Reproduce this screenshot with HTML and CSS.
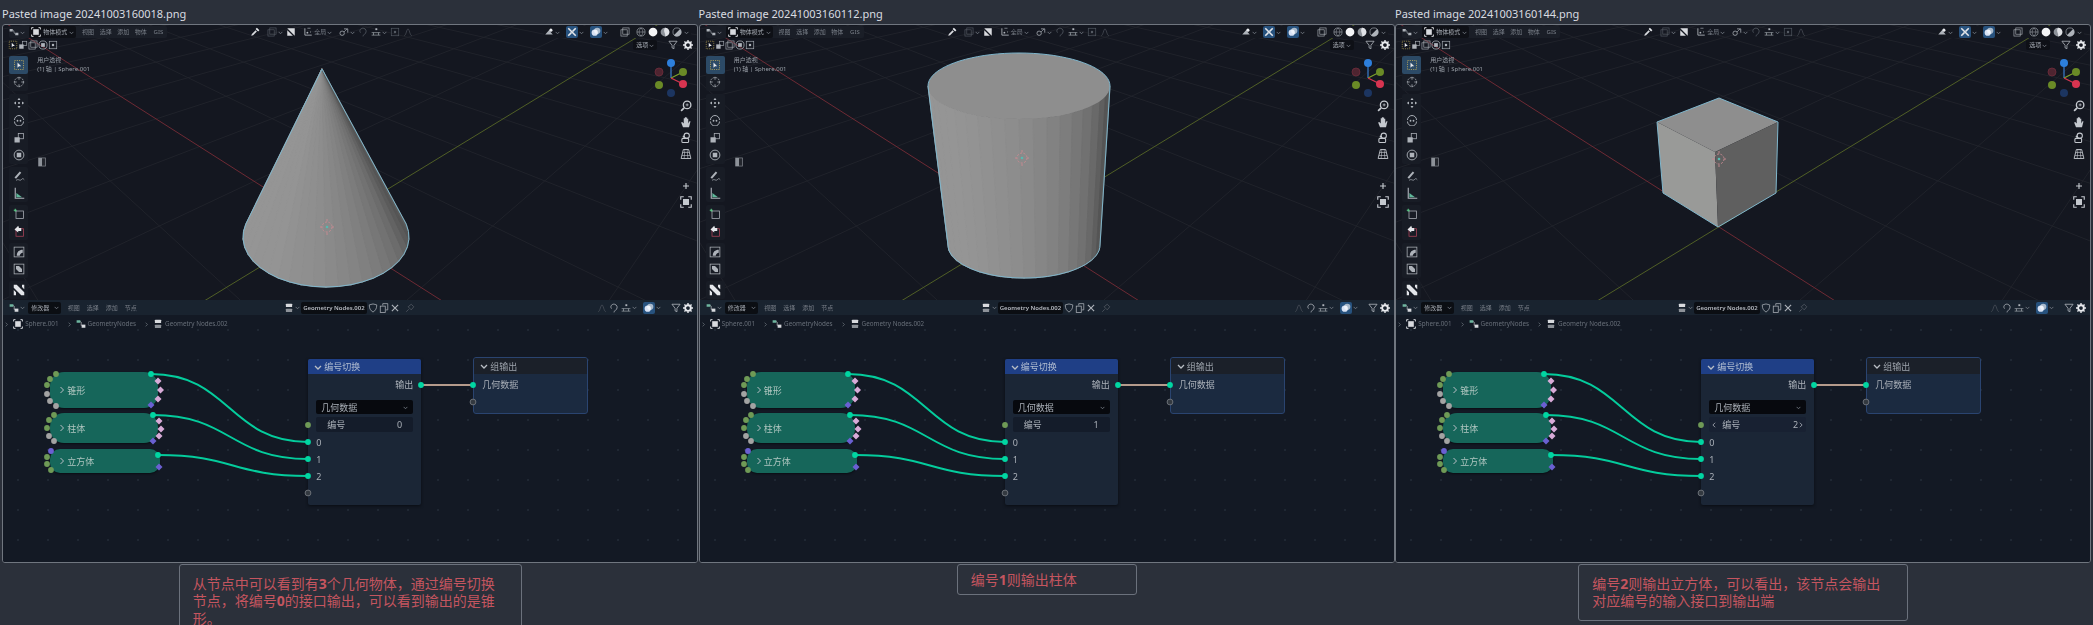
FILE: index.html
```html
<!DOCTYPE html>
<html lang="en">
<head>
<meta charset="UTF-8">
<meta name="viewport" content="width=device-width, initial-scale=1.0">
<title>Pasted images</title>
<link rel="stylesheet" href="styles.css">
</head>
<body>

<!-- icon sprite, used by every screenshot -->
<svg class="sprite" xmlns="http://www.w3.org/2000/svg">
  <symbol id="i-select" viewBox="0 0 16 16"><rect x="2" y="2" width="12" height="12" fill="none" stroke="#c9b25a" stroke-width="1" stroke-dasharray="1.5 1.5"/><path d="M6 4.5v7l2-1.8 3-.2z" fill="#e8eaee"/></symbol>
  <symbol id="i-cursor" viewBox="0 0 16 16"><circle cx="8" cy="8" r="6" fill="none" stroke="currentColor" stroke-dasharray="2.5 1"/><path d="M8 1v4M8 11v4M1 8h4M11 8h4" stroke="currentColor"/></symbol>
  <symbol id="i-move" viewBox="0 0 16 16"><path d="M8 1l2 3H6zM8 15l-2-3h4zM1 8l3-2v4zM15 8l-3 2V6z" fill="currentColor"/><circle cx="8" cy="8" r="1.4" fill="currentColor"/></symbol>
  <symbol id="i-rotate" viewBox="0 0 16 16"><path d="M2 8a6 6 0 0 1 12 0M14 10a6 6 0 0 1-12 0" fill="none" stroke="currentColor" stroke-width="1.3"/><circle cx="6" cy="9" r="1.2" fill="currentColor"/><circle cx="10" cy="9" r="1.2" fill="currentColor"/></symbol>
  <symbol id="i-scale" viewBox="0 0 16 16"><rect x="2" y="7" width="7" height="7" fill="currentColor"/><rect x="7" y="2" width="7" height="7" fill="none" stroke="currentColor"/></symbol>
  <symbol id="i-transform" viewBox="0 0 16 16"><circle cx="8" cy="8" r="6.5" fill="none" stroke="currentColor" stroke-width="1.2"/><rect x="5" y="5" width="6" height="6" fill="currentColor"/></symbol>
  <symbol id="i-annotate" viewBox="0 0 16 16"><path d="M2 10L9 2l2 1.5L4 11.500z" fill="currentColor"/><path d="M4 14c3-3 5 1 7-1s2-2 4 0" fill="none" stroke="currentColor"/></symbol>
  <symbol id="i-measure" viewBox="0 0 16 16"><path d="M3 1v14h12" fill="none" stroke="currentColor" stroke-width="1.5"/><path d="M4.500 8v5.500H12z" fill="#5fb89a"/></symbol>
  <symbol id="i-addcube" viewBox="0 0 16 16"><rect x="4" y="4" width="10" height="10" fill="none" stroke="currentColor"/><path d="M1 3h4M3 1v4" stroke="#5fd08a" stroke-width="1.300"/></symbol>
  <symbol id="i-extrude" viewBox="0 0 16 16"><rect x="4" y="5" width="10" height="10" fill="none" stroke="#b0445a"/><path d="M2 6l5-5 1 3h3v4H7v2z" fill="#e4e6ea"/></symbol>
  <symbol id="i-bevel" viewBox="0 0 16 16"><rect x="1.500" y="1.500" width="13" height="13" fill="none" stroke="currentColor"/><path d="M5 13C5 8 8 5 13 5v4c-2 0-4 2-4 4z" fill="currentColor"/></symbol>
  <symbol id="i-inset" viewBox="0 0 16 16"><rect x="1.500" y="1.500" width="13" height="13" fill="none" stroke="currentColor"/><path d="M4 4h4l4 4v4H8L4 8z" fill="currentColor"/></symbol>
  <symbol id="i-knife" viewBox="0 0 16 16"><path d="M1 1h4l10 10v4h-4L1 5zM1 8l3 3v4H1zM12 1h3v6l-3-3z" fill="#e4e6ea"/></symbol>
  <symbol id="i-sidebar" viewBox="0 0 16 16"><rect x="2" y="1" width="12" height="14" fill="#8d9299"/><rect x="8" y="2" width="5" height="12" fill="#23262d"/></symbol>
  <symbol id="i-zoom" viewBox="0 0 16 16"><circle cx="9.500" cy="6.500" r="5" fill="none" stroke="currentColor" stroke-width="1.800"/><path d="M5.500 10.500L1.500 14.500" stroke="currentColor" stroke-width="2.400"/><path d="M7.500 6.500h4M9.500 4.500v4" stroke="currentColor"/></symbol>
  <symbol id="i-hand" viewBox="0 0 16 16"><path d="M4 15L1.500 8.500l1.500-.5L5 10V3h1.500v5-6.500H8V8V2h1.500v6-4.500H11V10l1.500-3H14l-2 8z" fill="currentColor"/></symbol>
  <symbol id="i-camera" viewBox="0 0 16 16"><circle cx="9" cy="5" r="3.500" fill="none" stroke="currentColor" stroke-width="1.400"/><rect x="2.500" y="8.500" width="9" height="5.500" rx="1.500" fill="none" stroke="currentColor" stroke-width="1.400"/><circle cx="5" cy="6" r="1.500" fill="currentColor"/></symbol>
  <symbol id="i-persp" viewBox="0 0 16 16"><path d="M4.500 2h7l3 12h-13z" fill="none" stroke="currentColor" stroke-width="1.200"/><path d="M3.500 6h9M2.500 10h11M6.500 2l-1 12M9.500 2l1 12" stroke="currentColor" stroke-width=".8"/></symbol>
  <symbol id="i-plus" viewBox="0 0 16 16"><path d="M8 4v8M4 8h8" stroke="currentColor" stroke-width="1.500"/></symbol>
  <symbol id="i-frame" viewBox="0 0 16 16"><rect x="4" y="4" width="8" height="8" fill="currentColor"/><path d="M1 5V1h4M11 1h4v4M15 11v4h-4M5 15H1v-4" fill="none" stroke="currentColor" stroke-width="1.500"/></symbol>
  <symbol id="i-object" viewBox="0 0 16 16"><rect x="3.500" y="3.500" width="9" height="9" fill="#d8dade"/><path d="M1 1h3M1 1v3M15 1h-3M15 1v3M1 15h3M1 15v-3M15 15h-3M15 15v-3" stroke="#e8eaee" stroke-width="1.400"/></symbol>
  <symbol id="i-editor" viewBox="0 0 16 16"><path d="M1 3h5v4H1zM10 9h5v4h-5z" fill="currentColor"/><path d="M6 5c3 0 1 6 4 6" fill="none" stroke="currentColor"/></symbol>
  <symbol id="i-nodes" viewBox="0 0 16 16"><rect x="1" y="2" width="6" height="4" fill="#6fb6a0"/><rect x="9" y="9" width="6" height="5" fill="#d8dade"/><path d="M7 4c3 0 0 7 2 7" fill="none" stroke="#d8dade"/></symbol>
  <symbol id="i-group" viewBox="0 0 16 16"><rect x="3" y="1" width="10" height="5.500" rx="1" fill="#d8dade"/><rect x="3" y="9" width="10" height="5.500" rx="1" fill="#8d9299"/></symbol>
  <symbol id="i-drop" viewBox="0 0 16 16"><path d="M2 14l1-3 6-6 2 2-6 6z" fill="#d8dade"/><path d="M9 3l2-2 4 4-2 2z" fill="#e8eaee"/></symbol>
  <symbol id="i-magnet" viewBox="0 0 16 16"><path d="M2 2l12 12V2zM2 5v9h9z" fill="#d8dade"/></symbol>
  <symbol id="i-pivot" viewBox="0 0 16 16"><path d="M3 2v11h11" fill="none" stroke="currentColor" stroke-width="1.400"/><circle cx="7" cy="9" r="1.500" fill="currentColor"/><path d="M7 2h5M12 7v2" stroke="currentColor"/></symbol>
  <symbol id="i-link" viewBox="0 0 16 16"><circle cx="5" cy="10" r="3.500" fill="none" stroke="currentColor" stroke-width="1.200"/><path d="M8 3h6v6" fill="none" stroke="currentColor" stroke-width="1.200"/><path d="M8 8l5-5" stroke="currentColor"/></symbol>
  <symbol id="i-lasso" viewBox="0 0 16 16"><path d="M4 9C1 5 5 1 9 2c4 1 5 5 3 8s-4 2-4 5" fill="none" stroke="currentColor" stroke-width="1.300"/></symbol>
  <symbol id="i-snap" viewBox="0 0 16 16"><rect x="7" y="2" width="3" height="3" fill="currentColor"/><path d="M1 9h14M1 13h14M4 9v4M12 9v4" stroke="currentColor"/></symbol>
  <symbol id="i-dot" viewBox="0 0 16 16"><rect x="2" y="2" width="12" height="12" fill="none" stroke="currentColor"/><circle cx="8" cy="8" r="2" fill="currentColor"/></symbol>
  <symbol id="i-peak" viewBox="0 0 16 16"><path d="M2 14C5 13 6 3 8 3s3 10 6 11" fill="none" stroke="currentColor"/></symbol>
  <symbol id="i-gizmo" viewBox="0 0 16 16"><path d="M2 12l6-7 6 7z" fill="currentColor"/><circle cx="11" cy="5" r="2.500" fill="#e8eaee"/></symbol>
  <symbol id="i-bones" viewBox="0 0 16 16"><path d="M2 2l12 12M14 2L9 7M2 14l5-5" stroke="#e4e6ea" stroke-width="2.500"/></symbol>
  <symbol id="i-overlay" viewBox="0 0 16 16"><circle cx="6" cy="9" r="5" fill="#d8e2f4"/><circle cx="10" cy="6" r="5" fill="#fff" fill-opacity=".6"/></symbol>
  <symbol id="i-xray" viewBox="0 0 16 16"><rect x="1.500" y="4.500" width="10" height="10" fill="none" stroke="currentColor"/><rect x="4.500" y="1.500" width="10" height="10" fill="none" stroke="currentColor"/></symbol>
  <symbol id="i-wire" viewBox="0 0 16 16"><circle cx="8" cy="8" r="6.500" fill="none" stroke="currentColor"/><path d="M1.500 8h13M8 1.500c-4 4-4 9 0 13M8 1.500c4 4 4 9 0 13" fill="none" stroke="currentColor" stroke-width=".8"/></symbol>
  <symbol id="i-solid" viewBox="0 0 16 16"><circle cx="8" cy="8" r="7" fill="#f4f5f7"/></symbol>
  <symbol id="i-mat" viewBox="0 0 16 16"><circle cx="8" cy="8" r="7" fill="#8d9299"/><path d="M8 1a7 7 0 0 1 0 14c2-4-4-8 0-14z" fill="#e0e2e6"/></symbol>
  <symbol id="i-render" viewBox="0 0 16 16"><circle cx="8" cy="8" r="6.500" fill="none" stroke="currentColor"/><path d="M3 13L13 3a6.500 6.500 0 0 1-10 10z" fill="currentColor"/></symbol>
  <symbol id="i-filter" viewBox="0 0 16 16"><path d="M1.500 2h13L9.500 8.500V14l-3-1.500v-4z" fill="none" stroke="currentColor" stroke-width="1.300"/></symbol>
  <symbol id="i-gear" viewBox="0 0 16 16"><circle cx="8" cy="8" r="4.500" fill="none" stroke="#e8eaee" stroke-width="3"/><path d="M8 0v3M8 13v3M0 8h3M13 8h3M2.300 2.300l2 2M11.700 11.700l2 2M13.700 2.300l-2 2M4.300 11.700l-2 2" stroke="#e8eaee" stroke-width="2.200"/></symbol>
  <symbol id="i-caret" viewBox="0 0 8 8"><path d="M1 3l3 3 3-3" fill="none" stroke="currentColor" stroke-width="1.300"/></symbol>
  <symbol id="i-shield" viewBox="0 0 16 16"><path d="M2 3l6-1.500L14 3c0 6-2 9-6 11.500C4 12 2 9 2 3z" fill="none" stroke="currentColor" stroke-width="1.200"/></symbol>
  <symbol id="i-copy" viewBox="0 0 16 16"><rect x="2" y="5" width="8" height="10" fill="none" stroke="currentColor" stroke-width="1.200"/><path d="M6 4V1h8v10h-3" fill="none" stroke="currentColor" stroke-width="1.200"/></symbol>
  <symbol id="i-x" viewBox="0 0 16 16"><path d="M3 3l10 10M13 3L3 13" stroke="currentColor" stroke-width="1.800"/></symbol>
  <symbol id="i-pin" viewBox="0 0 16 16"><path d="M2 14l4-4M5 6l5-4 4 4-4 5z" fill="none" stroke="currentColor" stroke-width="1.200"/></symbol>
  <symbol id="i-chev" viewBox="0 0 8 8"><path d="M2.500 1l3 3-3 3" fill="none" stroke="currentColor" stroke-width="1"/></symbol>
</svg>

<main class="gallery" id="gallery"></main>

<script src="script.js"></script>
</body>
</html>
```
FILE: styles.css
```css
html, body {
  margin: 0;
  height: 625px;
  overflow: hidden;
  background-color: #2b303a;
}
body {
  padding-left: 2px;
  font-family: "Noto Sans", "Noto Sans CJK SC", sans-serif;
}
.sprite {
  display: none;
}
.gallery {
  display: grid;
  grid-template-columns: repeat(3, 696.5px);
}
.figure {
  margin: 0;
  display: flex;
  flex-direction: column;
  align-items: center;
}
.file-name {
  align-self: flex-start;
  height: 24px;
  line-height: 27px;
  font-size: 11px;
  color: #d9dce1;
  white-space: nowrap;
}
.shot {
  width: 696px;
  height: 539px;
  box-sizing: border-box;
  border: 1px solid #70767f;
  border-radius: 3px;
  overflow: hidden;
  display: flex;
  flex-direction: column;
  background-color: #141720;
  filter: blur(.45px);
}

/* captions under each screenshot */
.caption {
  box-sizing: border-box;
  flex: none;
  margin-top: 1px;
  padding: 10px 13px;
  border: 1px solid #6b717c;
  border-radius: 3px;
  font-size: 14px;
  line-height: 17.3px;
  color: #c4555f;
}
.caption b {
  font-weight: 700;
}
.cap-line {
  display: block;
  white-space: nowrap;
}
.caption-wide {
  width: 343px;
}
.caption-small {
  width: 180px;
  padding: 6px 13px;
}
.caption-mid {
  width: 330px;
}

/* shared bits */
.ic {
  display: block;
  flex: none;
  width: 10px;
  height: 10px;
  color: #aeb3ba;
}
.ic-dim {
  color: #565c65;
}
.caret {
  display: block;
  flex: none;
  width: 5px;
  height: 5px;
  color: #7d838b;
}
.label {
  font-size: 6px;
  line-height: 10px;
  color: #787e87;
  white-space: nowrap;
}
.pair {
  display: flex;
  align-items: center;
  gap: 1px;
}
.on-blue {
  padding: 1px;
  border-radius: 2px;
  background-color: #27527e;
}
.on-blue .ic {
  color: #dfe8f4;
}
.outline {
  fill: none;
  stroke: #7fb6cc;
  stroke-width: 1;
  stroke-linejoin: round;
}

/* 3d viewport */
.viewport {
  position: relative;
  flex: none;
  height: 275px;
  overflow: hidden;
}
.scene {
  position: absolute;
  left: 0;
  top: 0;
  width: 694px;
  height: 275px;
}
.vp-bar {
  position: relative;
  display: flex;
  align-items: center;
  height: 14px;
  padding: 0 6px;
}
.vp-left,
.vp-mid,
.vp-right {
  display: flex;
  align-items: center;
}
.vp-left {
  width: 158px;
  height: 12px;
  background-color: #1a1e27;
  border-radius: 2px;
}
.vp-mid {
  margin-left: 83px;
  gap: 3px;
}
.vp-right {
  margin-left: auto;
  gap: 2px;
  padding-right: 2px;
  background-color: #14171f;
}
.mode {
  display: flex;
  align-items: center;
  gap: 2px;
  margin-left: 4px;
  padding: 0 2px;
  height: 12px;
  background-color: #0e1016;
  border-radius: 2px;
}
.mode .label {
  color: #a8adb5;
}
.menu-item {
  width: 19px;
  text-align: center;
}
.first-item {
  margin-left: 3px;
}
.space-a {
  margin-left: 4px;
}
.space-b {
  margin-left: 8px;
}
.space-c {
  margin-left: 10px;
}
.vp-row {
  position: relative;
  display: flex;
  align-items: center;
  justify-content: space-between;
  height: 12px;
  padding: 0 4px 0 5px;
}
.select-modes,
.vp-options {
  display: flex;
  align-items: center;
}
.vp-options {
  gap: 5px;
}
.options-pill {
  display: flex;
  align-items: center;
  gap: 1px;
  padding: 0 3px;
  margin-right: 6px;
  background-color: #0e1016;
  border-radius: 2px;
}
.options-pill .label {
  color: #a8adb5;
}
.tools {
  position: absolute;
  left: 6px;
  top: 31px;
  display: flex;
  flex-direction: column;
  gap: 3px;
}
.tool-group {
  display: flex;
  flex-direction: column;
  background-color: #181c25;
  border-radius: 2px;
}
.tool {
  width: 19px;
  height: 17.5px;
  display: flex;
  align-items: center;
  justify-content: center;
  border-radius: 2px;
}
.tool .ic {
  width: 12px;
  height: 12px;
}
.tool-active {
  background-color: #2c4a66;
}
.view-info {
  position: absolute;
  left: 34px;
  top: 31px;
  font-size: 6px;
  line-height: 9px;
  color: #9aa0a8;
  white-space: nowrap;
}
.sidebar-toggle {
  position: absolute;
  left: 34px;
  top: 132px;
}
.nav {
  position: absolute;
  right: 5px;
  top: 75px;
  display: flex;
  flex-direction: column;
  gap: 20px;
}
.nav-group {
  display: flex;
  flex-direction: column;
  gap: 4px;
}
.nav-group .ic {
  width: 12px;
  height: 12px;
  color: #c4c8ce;
}

/* node editor */
.editor-bar {
  flex: none;
  display: flex;
  align-items: center;
  height: 15px;
  padding: 0 4px 0 6px;
  background-color: #19232f;
}
.bar-pill {
  display: flex;
  align-items: center;
  justify-content: space-between;
  width: 33px;
  height: 12px;
  margin-left: 3px;
  padding: 0 2px 0 3px;
  box-sizing: border-box;
  background-color: #0b0e13;
  border-radius: 2px;
}
.bar-pill .label {
  color: #a0a5ad;
}
.bar-mid {
  display: flex;
  align-items: center;
  gap: 1px;
  margin-left: 144px;
}
.tree-name {
  display: flex;
  align-items: center;
  height: 12px;
  padding: 0 2px;
  background-color: #0b0e13;
  border-radius: 2px;
}
.tree-title {
  font-size: 6px;
  font-weight: 600;
  color: #b8bcc3;
  white-space: nowrap;
}
.bar-right {
  display: flex;
  align-items: center;
  gap: 2px;
  margin-left: auto;
}
.editor {
  position: relative;
  flex: 1;
  background-color: #131924;
  background-image: radial-gradient(circle, #242c38 .6px, transparent 1px);
  background-size: 30px 30px;
}
.crumbs {
  display: flex;
  align-items: center;
  height: 18px;
  padding-left: 1px;
}
.crumbs .label {
  font-size: 6.3px;
  margin-left: 2px;
  color: #686f79;
}
.crumb-sep {
  margin-left: 8px;
}
.crumb-sep:first-child {
  margin-left: 0;
}
.crumb-sep + .ic {
  margin-left: 4px;
}
.links {
  position: absolute;
  left: 0;
  top: 0;
  width: 694px;
  height: 247px;
  z-index: 2;
}
.node {
  position: absolute;
  box-sizing: border-box;
  font-size: 9px;
  color: #aab0b8;
}
.node .chev {
  display: block;
  flex: none;
  width: 8px;
  height: 8px;
  color: #b9bec5;
}
.group-node {
  display: flex;
  align-items: center;
  gap: 1px;
  padding-left: 8px;
  border-radius: 14px;
  background-color: #16665a;
  box-shadow: 0 1px 2px #0a0d13;
  color: #b0c6c0;
}
.group-cone {
  left: 47px;
  top: 57px;
  width: 108px;
  height: 36px;
}
.group-cylinder {
  left: 47px;
  top: 98px;
  width: 108px;
  height: 30px;
}
.group-cube {
  left: 47px;
  top: 134px;
  width: 110px;
  height: 24px;
  border-radius: 10px;
}
.switch-node {
  left: 305px;
  top: 44px;
  width: 113px;
  height: 146px;
  background-color: #1b2636;
  border-radius: 2px;
  box-shadow: 0 1px 3px #0a0d13;
}
.output-node {
  left: 470px;
  top: 42px;
  width: 115px;
  height: 57px;
  background-color: #1b2a40;
  border: 1px solid #2a4470;
  border-radius: 3px;
}
.node-head {
  display: flex;
  align-items: center;
  gap: 2px;
  height: 15px;
  padding-left: 6px;
  background-color: #1f3f86;
  border-radius: 2px 2px 0 0;
  color: #b0bcd0;
}
.output-node .node-head {
  height: 16px;
  background-color: #1b2029;
  color: #9ba1aa;
}
.node .sock-row {
  height: 22px;
  line-height: 22px;
  padding: 0 8px;
}
.out-row {
  text-align: right;
}
.dropdown,
.number {
  display: flex;
  align-items: center;
  justify-content: space-between;
  box-sizing: border-box;
  margin: 0 8px;
  padding: 0 5px;
  border-radius: 2px;
}
.dropdown {
  height: 14px;
  margin-top: 4px;
  background-color: #07090e;
}
.number {
  height: 15px;
  margin-top: 3px;
  padding: 0 11px;
  background-color: #141c2a;
}
.number-hover {
  padding: 0 2px;
  background-color: #182132;
}
.number-hover .num-label {
  flex: 1;
  margin-left: 5px;
}
.node .number .chev {
  width: 6px;
  height: 6px;
}
.chev-left {
  transform: scaleX(-1);
}
.index-list {
  margin-top: 2px;
}
.index-row {
  height: 17px;
  line-height: 17px;
  padding-left: 8px;
}
```
FILE: script.js
```js
var panels = [
  {
    file: "Pasted image 20241003160018.png",
    shape: "cone",
    index: 0,
    captionClass: "caption-wide",
    caption: ["从节点中可以看到有<b>3</b>个几何物体，通过编号切换", "节点，将编号<b>0</b>的接口输出，可以看到输出的是锥", "形。"],
    origin: [327, 227]
  },
  {
    file: "Pasted image 20241003160112.png",
    shape: "cylinder",
    index: 1,
    captionClass: "caption-small",
    caption: ["编号<b>1</b>则输出柱体"],
    origin: [325, 158]
  },
  {
    file: "Pasted image 20241003160144.png",
    shape: "cube",
    index: 2,
    captionClass: "caption-mid",
    caption: ["编号<b>2</b>则输出立方体，可以看出，该节点会输出", "对应编号的输入接口到输出端"],
    origin: [326, 159]
  }
];

var GREEN = "#6f9a56", GREY = "#a3a3a3", PURPLE = "#6a60d2", PINK = "#d8abd8", TEAL = "#00d6a2";

function icon(name, cls) {
  return `<svg class="ic ${cls || ""}"><use href="#i-${name}"/></svg>`;
}
function caret() {
  return `<svg class="caret"><use href="#i-caret"/></svg>`;
}
function chev(cls) {
  return `<svg class="chev ${cls || ""}"><use href="#i-chev"/></svg>`;
}

// ground plane grid: lines run to two vanishing points above the picture
function gridLines() {
  var O = [326, 226], V1 = [-218, -120], V2 = [893, -120], k = 0.15, out = "";
  function project(u, v) {
    var w = 1 + k * u + k * v;
    return [
      ((O[0] + k * u * V1[0] + k * v * V2[0]) / w).toFixed(1),
      ((O[1] + k * u * V1[1] + k * v * V2[1]) / w).toFixed(1)
    ];
  }
  for (var n = -7; n <= 26; n++) {
    if (n === 0) continue;
    var start = (0.04 - 1 - k * n) / k;
    var a = project(start, n), b = project(300, n);
    var c = project(n, start), d = project(n, 300);
    out += `<line x1="${a[0]}" y1="${a[1]}" x2="${b[0]}" y2="${b[1]}"/>`;
    out += `<line x1="${c[0]}" y1="${c[1]}" x2="${d[0]}" y2="${d[1]}"/>`;
  }
  return out;
}

function ellipsePoint(e, deg) {
  var r = deg * Math.PI / 180;
  return [e.x + e.rx * Math.cos(r), e.y + e.ry * Math.sin(r)];
}

// grey for a facet, t goes from left (0) to right (1) of the shape
function facetGrey(t) {
  var stops = [[0, 150], [0.3, 148], [0.5, 140], [0.65, 128], [0.8, 110], [0.93, 84], [1, 96]];
  for (var i = 1; i < stops.length; i++) {
    if (t <= stops[i][0]) {
      var f = (t - stops[i - 1][0]) / (stops[i][0] - stops[i - 1][0]);
      var g = Math.round(stops[i - 1][1] + f * (stops[i][1] - stops[i - 1][1]));
      return `rgb(${g},${g},${g})`;
    }
  }
  return "rgb(96,96,96)";
}

function pts(list) {
  return list.map(function (p) { return p[0].toFixed(1) + "," + p[1].toFixed(1); }).join(" ");
}

function facet(points, t) {
  var grey = facetGrey(t);
  return `<polygon points="${pts(points)}" fill="${grey}" stroke="${grey}" stroke-width="1.200"/>`;
}

function coneShape() {
  var apex = [322, 69], base = { x: 326, y: 237, rx: 83, ry: 50 }, out = "", edge = [apex];
  var steps = 24, from = 195, to = -15;
  for (var i = 0; i < steps; i++) {
    var a = ellipsePoint(base, from + (to - from) * i / steps);
    var b = ellipsePoint(base, from + (to - from) * (i + 1) / steps);
    out += facet([apex, a, b], (i + 0.5) / steps);
    edge.push(a);
    if (i === steps - 1) edge.push(b);
  }
  return out + `<polygon class="outline" points="${pts(edge)}"/>`;
}

function cylinderShape() {
  var top = { x: 322, y: 86, rx: 91, ry: 33 }, bottom = { x: 327, y: 245, rx: 76, ry: 33 };
  var out = "", steps = 20, front = [], back = [];
  for (var i = 0; i < steps; i++) {
    var d0 = 180 - 180 * i / steps, d1 = 180 - 180 * (i + 1) / steps;
    out += facet([ellipsePoint(top, d0), ellipsePoint(top, d1), ellipsePoint(bottom, d1), ellipsePoint(bottom, d0)], (i + 0.5) / steps);
  }
  for (var j = 0; j <= 40; j++) {
    back.push(ellipsePoint(top, 180 + 180 * j / 40));
    front.push(ellipsePoint(bottom, 180 * j / 40));
  }
  out += `<ellipse cx="322" cy="86" rx="91" ry="33" fill="#8e8e8e"/>`;
  return out + `<polygon class="outline" points="${pts(back.concat(front))}"/>`;
}

function cubeShape() {
  return `
    <polygon points="326,98 264,122 322,152 385,122" fill="#8e8e8e"/>
    <polygon points="264,122 322,152 325,227 270,193" fill="#999a98"/>
    <polygon points="322,152 385,122 383,193 325,227" fill="#5f5f5f"/>
    <polygon class="outline" points="326,98 385,122 383,193 325,227 270,193 264,122"/>`;
}

function scene(p) {
  var shapes = { cone: coneShape, cylinder: cylinderShape, cube: cubeShape };
  var o = p.origin;
  return `<svg class="scene" viewBox="3 25 694 275">
    <g stroke="#23262d" stroke-width=".8">${gridLines()}</g>
    <line x1="-100" y1="-44" x2="480" y2="325" stroke="#6e2a34" stroke-width="1"/>
    <line x1="150" y1="334" x2="680" y2="11" stroke="#505f26" stroke-width="1"/>
    ${shapes[p.shape]()}
    <g fill="none" stroke="#c98a92" stroke-width=".9">
      <circle cx="${o[0]}" cy="${o[1]}" r="5" stroke-dasharray="2 1.500"/>
      <path d="M${o[0]} ${o[1] - 8}v2.500M${o[0]} ${o[1] + 5.500}v2.500M${o[0] - 7} ${o[1]}h2M${o[0] + 5} ${o[1]}h2"/>
    </g>
    <circle cx="${o[0]}" cy="${o[1]}" r="1.300" fill="#59b9b0"/>
    <path d="M671 78V63" stroke-width="1.200" stroke="#3a7fd0"/>
    <path d="M671 78L683 72" stroke="#7fa32a" stroke-width="1.200"/>
    <path d="M671 78L683 84" stroke="#d8334f" stroke-width="1.200"/>
    <circle cx="659" cy="72" r="4" fill="#4e2430" stroke="#6e2d3b" stroke-width=".8"/>
    <circle cx="671" cy="93" r="4" fill="#1c3560"/>
    <circle cx="659" cy="85" r="4" fill="#6a8a26"/>
    <circle cx="683" cy="72" r="4" fill="#6a8a26"/>
    <circle cx="683" cy="84" r="4" fill="#d83450"/>
    <circle cx="671" cy="63" r="4" fill="#2d7fdc"/>
  </svg>`;
}

function viewport(p) {
  var toolGroups = [
    ["select", "cursor"],
    ["move", "rotate", "scale", "transform"],
    ["annotate", "measure"],
    ["addcube", "extrude"],
    ["bevel", "inset"],
    ["knife"]
  ];
  var tools = toolGroups.map(function (group) {
    var items = group.map(function (name) {
      return `<div class="tool ${name === "select" ? "tool-active" : ""}">${icon(name)}</div>`;
    }).join("");
    return `<div class="tool-group">${items}</div>`;
  }).join("");
  var menus = ["视图", "选择", "添加", "物体", "GIS"].map(function (m, i) {
    return `<span class="label menu-item ${i === 0 ? "first-item" : ""}">${m}</span>`;
  }).join("");

  return `<div class="viewport">
    ${scene(p)}
    <div class="vp-bar">
      <div class="vp-left">
        <div class="pair">${icon("editor")}${caret()}</div>
        <div class="mode">${icon("object")}<span class="label">物体模式</span>${caret()}</div>
        ${menus}
      </div>
      <div class="vp-mid">
        ${icon("drop")}
        <div class="pair space-a">${icon("xray", "ic-dim")}${caret()}</div>
        ${icon("magnet")}
        <div class="pair space-a">${icon("pivot")}<span class="label">全局</span>${caret()}</div>
        <div class="pair space-a">${icon("link")}${caret()}</div>
        ${icon("lasso", "ic-dim")}
        <div class="pair">${icon("snap")}${caret()}</div>
        ${icon("dot", "ic-dim")}
        ${icon("peak", "ic-dim")}
      </div>
      <div class="vp-right">
        <div class="pair">${icon("gizmo")}${caret()}</div>
        <div class="pair space-a"><span class="on-blue">${icon("bones")}</span>${caret()}</div>
        <div class="pair space-a"><span class="on-blue">${icon("overlay")}</span>${caret()}</div>
        ${icon("xray", "space-c")}
        ${icon("wire", "space-a")}
        ${icon("solid")}
        ${icon("mat")}
        ${icon("render")}
        ${caret()}
      </div>
    </div>
    <div class="vp-row">
      <div class="select-modes">
        ${icon("select")}${icon("scale")}${icon("xray")}${icon("transform")}${icon("dot")}
      </div>
      <div class="vp-options">
        <div class="options-pill"><span class="label">选项</span>${caret()}</div>
        ${icon("filter")}
        ${icon("gear")}
      </div>
    </div>
    <div class="tools">${tools}</div>
    <div class="view-info">用户透视<br>(1) 轴 | Sphere.001</div>
    <div class="sidebar-toggle">${icon("sidebar")}</div>
    <div class="nav">
      <div class="nav-group">${icon("zoom")}${icon("hand")}${icon("camera")}${icon("persp")}</div>
      <div class="nav-group">${icon("plus")}${icon("frame")}</div>
    </div>
  </div>`;
}

function editorBar() {
  var menus = ["视图", "选择", "添加", "节点"].map(function (m, i) {
    return `<span class="label menu-item ${i === 0 ? "first-item" : ""}">${m}</span>`;
  }).join("");
  return `<div class="editor-bar">
    <div class="pair">${icon("nodes")}${caret()}</div>
    <div class="bar-pill"><span class="label">修改器</span>${caret()}</div>
    ${menus}
    <div class="bar-mid">
      <div class="pair">${icon("group")}${caret()}</div>
      <div class="tree-name"><span class="tree-title">Geometry Nodes.002</span></div>
      ${icon("shield")}${icon("copy")}${icon("x")}
      ${icon("pin", "ic-dim space-a")}
    </div>
    <div class="bar-right">
      ${icon("peak", "ic-dim")}
      ${icon("lasso")}
      <div class="pair">${icon("snap")}${caret()}</div>
      <div class="pair space-a"><span class="on-blue">${icon("overlay")}</span>${caret()}</div>
      ${icon("filter", "space-b")}
      ${icon("gear")}
    </div>
  </div>`;
}

function wire(x0, y0, x1, y1) {
  var dx = (x1 - x0) * 0.5;
  return `<path d="M${x0} ${y0}C${x0 + dx} ${y0} ${x1 - dx} ${y1} ${x1} ${y1}" fill="none" stroke="#04cc9c" stroke-width="2"/>`;
}
function dot(x, y, color) {
  return `<circle cx="${x}" cy="${y}" r="2.900" fill="${color}"/>`;
}
function diamond(x, y, color) {
  return `<path d="M${x} ${y - 3.500}L${x + 3.500} ${y}L${x} ${y + 3.500}L${x - 3.500} ${y}Z" fill="${color}"/>`;
}

function links() {
  var out = wire(151, 374, 308, 442) + wire(153, 415, 308, 459) + wire(158, 455, 308, 476);
  out += `<path d="M421 385H473" stroke="#b59b8c" stroke-width="1.800"/>`;
  [[56, 374], [50, 379], [47, 385]].forEach(function (s) { out += dot(s[0], s[1], GREEN); });
  [[47, 394], [50, 401], [56, 406]].forEach(function (s) { out += dot(s[0], s[1], GREY); });
  [[158, 381], [160.5, 390], [158, 399]].forEach(function (s) { out += diamond(s[0], s[1], PINK); });
  out += diamond(151, 405, PURPLE) + dot(151, 374, TEAL);
  [[54, 415], [49, 420], [47, 428]].forEach(function (s) { out += dot(s[0], s[1], GREEN); });
  [[49, 436], [54, 441]].forEach(function (s) { out += dot(s[0], s[1], GREY); });
  [[159, 421], [161, 429], [159, 436]].forEach(function (s) { out += diamond(s[0], s[1], PINK); });
  out += diamond(153, 441, PURPLE) + dot(153, 415, TEAL);
  out += dot(51, 451, PURPLE);
  [[47, 457], [47, 464], [51, 470]].forEach(function (s) { out += dot(s[0], s[1], GREEN); });
  out += diamond(159, 467, PURPLE) + dot(158, 455, TEAL);
  // switch and group output sockets
  out += dot(308, 425, GREEN) + dot(308, 442, TEAL) + dot(308, 459, TEAL) + dot(308, 476, TEAL);
  out += `<circle cx="308" cy="493" r="2.900" fill="#333940" stroke="#6b7077"/>`;
  out += dot(421, 385, TEAL) + dot(473, 385, TEAL);
  out += `<circle cx="473" cy="402" r="2.900" fill="#333940" stroke="#6b7077"/>`;
  return `<svg class="links" viewBox="3 315 694 247">${out}</svg>`;
}

function numberField(n) {
  // the third screenshot has the mouse over the field, so the arrows show
  if (n === 2) {
    return `<div class="number number-hover">${chev("chev-left")}<span class="num-label">编号</span><span>${n}</span>${chev()}</div>`;
  }
  return `<div class="number"><span class="num-label">编号</span><span>${n}</span></div>`;
}

function editor(p) {
  return `<div class="editor">
    <div class="crumbs">
      <svg class="caret crumb-sep"><use href="#i-chev"/></svg>${icon("object")}<span class="label">Sphere.001</span>
      <svg class="caret crumb-sep"><use href="#i-chev"/></svg>${icon("nodes")}<span class="label">GeometryNodes</span>
      <svg class="caret crumb-sep"><use href="#i-chev"/></svg>${icon("group")}<span class="label">Geometry Nodes.002</span>
    </div>
    <div class="node group-node group-cone">${chev()}<span>锥形</span></div>
    <div class="node group-node group-cylinder">${chev()}<span>柱体</span></div>
    <div class="node group-node group-cube">${chev()}<span>立方体</span></div>
    <div class="node switch-node">
      <div class="node-head"><svg class="chev"><use href="#i-caret"/></svg><span>编号切换</span></div>
      <div class="sock-row out-row">输出</div>
      <div class="dropdown"><span>几何数据</span><svg class="caret"><use href="#i-caret"/></svg></div>
      ${numberField(p.index)}
      <div class="index-list">
        <div class="index-row">0</div>
        <div class="index-row">1</div>
        <div class="index-row">2</div>
      </div>
    </div>
    <div class="node output-node">
      <div class="node-head"><svg class="chev"><use href="#i-caret"/></svg><span>组输出</span></div>
      <div class="sock-row">几何数据</div>
    </div>
    ${links()}
  </div>`;
}

document.getElementById("gallery").innerHTML = panels.map(function (p) {
  var lines = p.caption.map(function (line) {
    return `<span class="cap-line">${line}</span>`;
  }).join("");
  return `<figure class="figure">
    <div class="file-name">${p.file}</div>
    <div class="shot">
      ${viewport(p)}
      ${editorBar()}
      ${editor(p)}
    </div>
    <figcaption class="caption ${p.captionClass}">${lines}</figcaption>
  </figure>`;
}).join("");
```
